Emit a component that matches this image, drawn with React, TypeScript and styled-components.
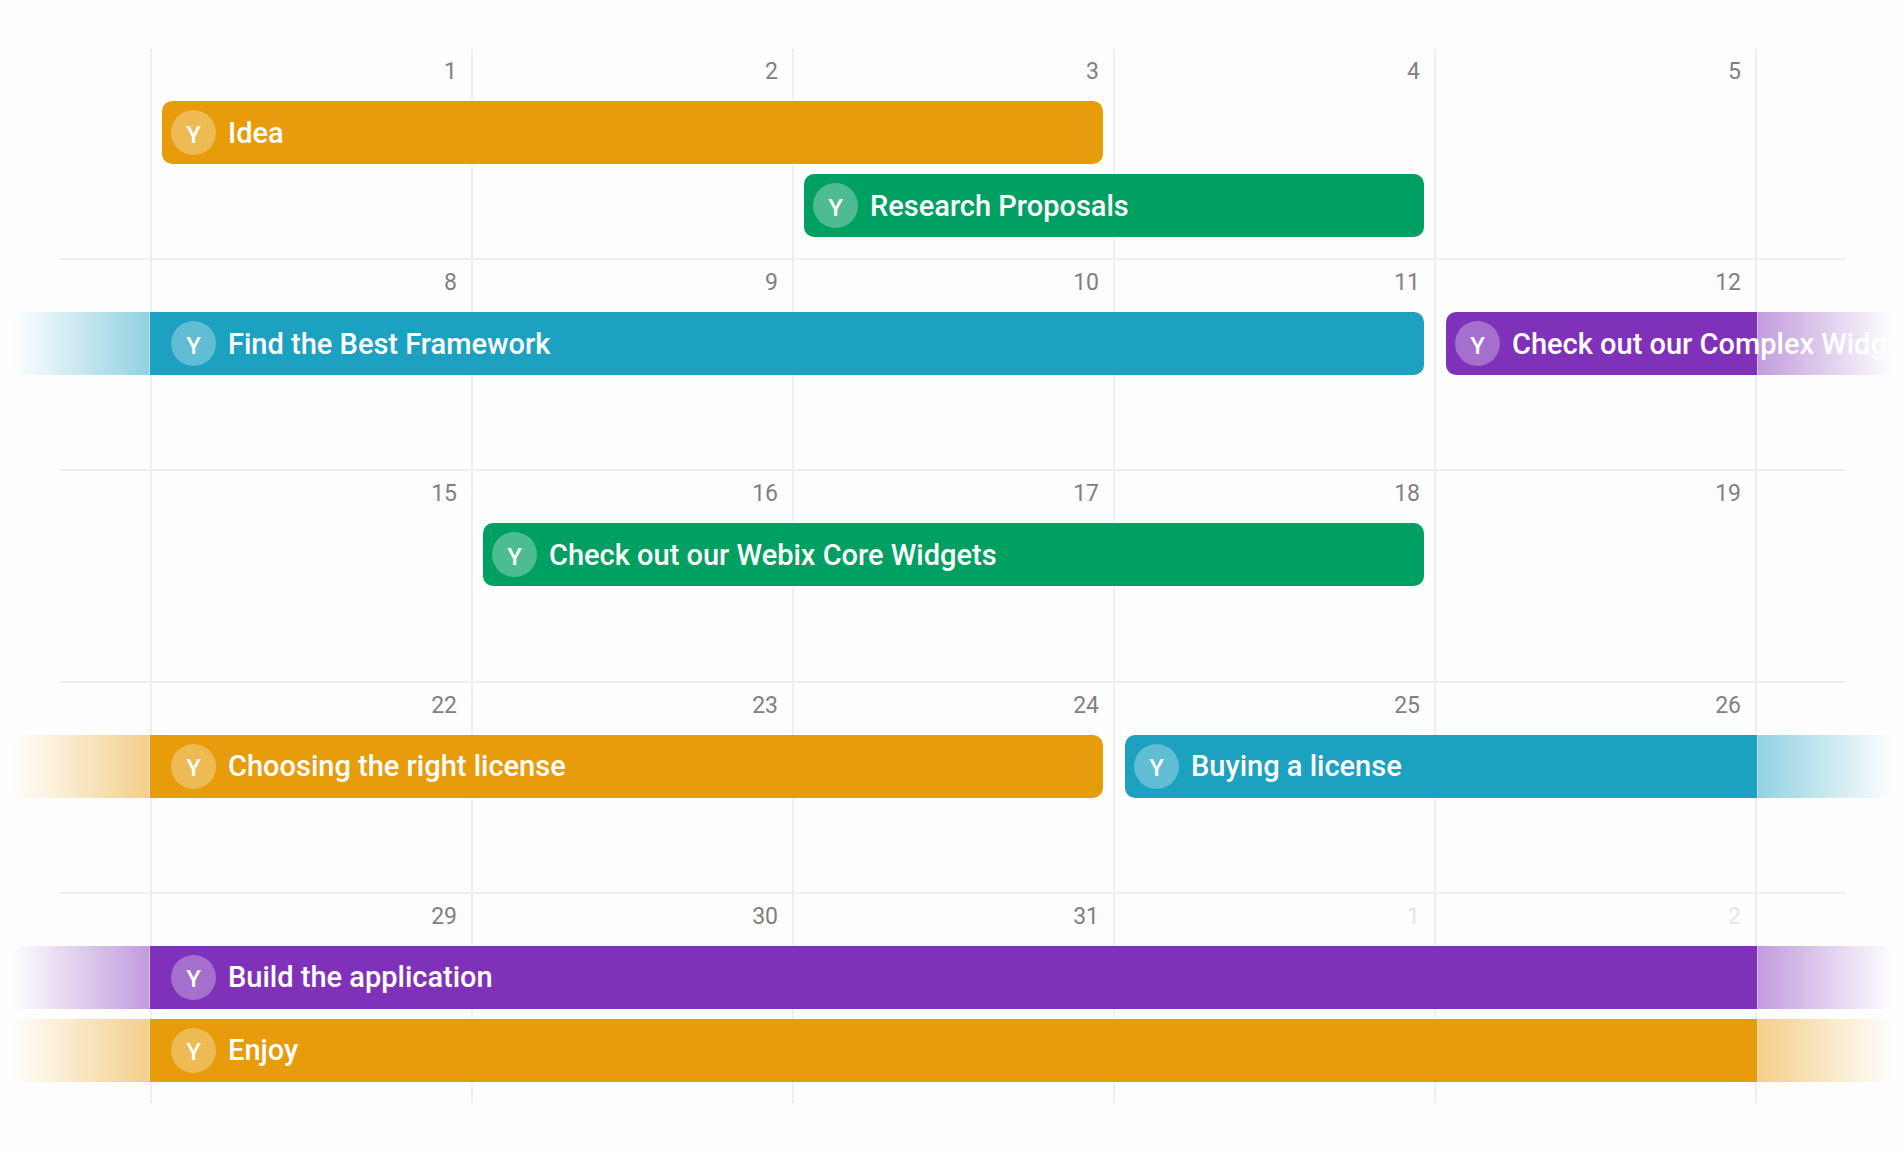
import React from "react";
import styled, { createGlobalStyle, css } from "styled-components";

const GlobalStyle = createGlobalStyle`
  *, *::before, *::after { box-sizing: border-box; }
  body {
    margin: 0;
    background: #fefefe;
    font-family: Roboto, "Liberation Sans", sans-serif;
  }
`;

const LINE = "#eeeef3";

const palette = {
  orange: "231, 156, 11",
  green: "0, 160, 99",
  blue: "28, 161, 193",
  purple: "127, 50, 185",
};

type Tone = keyof typeof palette;

interface CalendarEvent {
  title: string;
  tone: Tone;
  /* 1-based day columns, both inclusive */
  from: number;
  to: number;
  lane?: number;
  fromPrevious?: boolean;
  intoNext?: boolean;
}

interface Week {
  days: number[];
  outside?: number;
  events: CalendarEvent[];
}

const weeks: Week[] = [
  {
    days: [1, 2, 3, 4, 5],
    events: [
      { title: "Idea", tone: "orange", from: 1, to: 3 },
      { title: "Research Proposals", tone: "green", from: 3, to: 4, lane: 2 },
    ],
  },
  {
    days: [8, 9, 10, 11, 12],
    events: [
      { title: "Find the Best Framework", tone: "blue", from: 1, to: 4, fromPrevious: true },
      { title: "Check out our Complex Widgets", tone: "purple", from: 5, to: 5, intoNext: true },
    ],
  },
  {
    days: [15, 16, 17, 18, 19],
    events: [{ title: "Check out our Webix Core Widgets", tone: "green", from: 2, to: 4 }],
  },
  {
    days: [22, 23, 24, 25, 26],
    events: [
      { title: "Choosing the right license", tone: "orange", from: 1, to: 3, fromPrevious: true },
      { title: "Buying a license", tone: "blue", from: 4, to: 5, intoNext: true },
    ],
  },
  {
    days: [29, 30, 31, 1, 2],
    outside: 3,
    events: [
      { title: "Build the application", tone: "purple", from: 1, to: 5, fromPrevious: true, intoNext: true },
      { title: "Enjoy", tone: "orange", from: 1, to: 5, lane: 2, fromPrevious: true, intoNext: true },
    ],
  },
];

const Calendar = styled.main`
  display: flex;
  flex-direction: column;
  min-height: 100vh;
  padding: 49px 11px 47px 12px;
`;

const WeekRow = styled.section`
  flex: 1;
  display: grid;
  grid-template-columns: 140px repeat(5, minmax(0, 1fr)) 136px;
  grid-template-rows: 52px 73px 73px 1fr 2px;
`;

const Cell = styled.div<{ $column: number; $muted?: boolean }>`
  grid-column: ${(p) => p.$column};
  grid-row: 1 / 5;
  padding: 9px 14px 0 0;
  border-right: 2px solid ${LINE};
  color: ${(p) => (p.$muted ? "#e6e6e6" : "#808080")};
  font-size: 23px;
  line-height: 28px;
  text-align: right;
`;

const Divider = styled.div`
  grid-column: 1 / -1;
  grid-row: 5;
  margin: 0 47px;
  background: ${LINE};
`;

/* A bar that runs on past the visible days ends in a half-strength fade. */
const barFill = (rgb: string, left?: boolean, right?: boolean) => {
  const solid = `rgb(${rgb})`;
  const half = `rgba(${rgb}, 0.48)`;
  const seam = `rgba(${rgb}, 0.3)`;
  const clear = `rgba(${rgb}, 0)`;
  const start = left ? `${clear} 0, ${half} 137px, ${seam} 137px, ${seam} 138px, ${solid} 138px` : `${solid} 0`;
  const end = right
    ? `${solid} calc(100% - 136px), ${seam} calc(100% - 136px), ${seam} calc(100% - 135px), ${half} calc(100% - 135px), ${clear} 100%`
    : `${solid} 100%`;
  return `linear-gradient(to right, ${start}, ${end})`;
};

const Bar = styled.article<{
  $tone: Tone;
  $from: number;
  $to: number;
  $lane: number;
  $left?: boolean;
  $right?: boolean;
}>`
  grid-column: ${(p) => (p.$left ? 1 : p.$from + 1)} / ${(p) => (p.$right ? 8 : p.$to + 2)};
  grid-row: ${(p) => p.$lane + 1};
  display: flex;
  align-items: center;
  gap: 12px;
  min-width: 0;
  height: 63px;
  margin-left: ${(p) => (p.$left ? 0 : 10)}px;
  margin-right: ${(p) => (p.$right ? 0 : 12)}px;
  padding-left: ${(p) => (p.$left ? 159 : 9)}px;
  border-radius: 10px;
  background: ${(p) => barFill(palette[p.$tone], p.$left, p.$right)};
  color: #fff;
  ${(p) =>
    !p.$left &&
    !p.$right &&
    css`
      box-shadow: 0 0 0 1px #fefefe;
    `}
`;

const Avatar = styled.span`
  flex: none;
  display: grid;
  place-items: center;
  width: 45px;
  height: 45px;
  padding-top: 4px;
  border-radius: 50%;
  background: rgba(255, 255, 255, 0.3);
  font-size: 24px;
  font-weight: 500;
  line-height: 28px;
`;

const Title = styled.h2`
  flex: 1;
  min-width: 0;
  margin: 0;
  overflow: hidden;
  font-size: 29px;
  font-weight: 500;
  line-height: 36px;
  white-space: nowrap;
`;

export default function App() {
  return (
    <>
      <GlobalStyle />
      <Calendar>
        {weeks.map((week, w) => (
          <WeekRow key={w}>
            <Cell $column={1} />
            {week.days.map((day, d) => (
              <Cell key={d} $column={d + 2} $muted={week.outside !== undefined && d >= week.outside}>
                {day}
              </Cell>
            ))}
            {w < weeks.length - 1 && <Divider />}
            {week.events.map((event) => (
              <Bar
                key={event.title}
                $tone={event.tone}
                $from={event.from}
                $to={event.to}
                $lane={event.lane ?? 1}
                $left={event.fromPrevious}
                $right={event.intoNext}
              >
                <Avatar>Y</Avatar>
                <Title>{event.title}</Title>
              </Bar>
            ))}
          </WeekRow>
        ))}
      </Calendar>
    </>
  );
}
